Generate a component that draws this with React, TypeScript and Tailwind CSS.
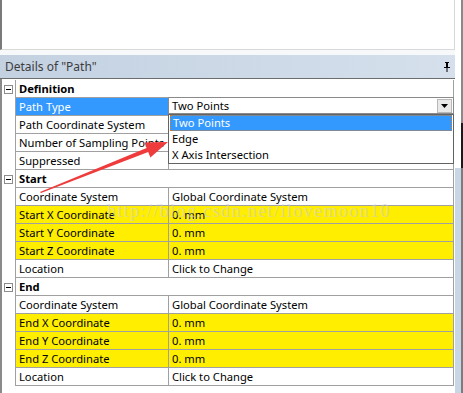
import React from "react";

// ── Data ──────────────────────────────────────────────────────────────────────

type Row =
  | { kind: "group"; label: string }
  | { kind: "prop"; label: string; value: string; yellow?: boolean; selected?: boolean; hidden?: boolean };

const rows: Row[] = [
  { kind: "group", label: "Definition" },
  { kind: "prop", label: "Path Type", value: "Two Points", selected: true },
  { kind: "prop", label: "Path Coordinate System", value: "Global Coordinate System", hidden: true },
  { kind: "prop", label: "Number of Sampling Points", value: "47.", hidden: true },
  { kind: "prop", label: "Suppressed", value: "No", hidden: true },
  { kind: "group", label: "Start" },
  { kind: "prop", label: "Coordinate System", value: "Global Coordinate System" },
  { kind: "prop", label: "Start X Coordinate", value: "0. mm", yellow: true },
  { kind: "prop", label: "Start Y Coordinate", value: "0. mm", yellow: true },
  { kind: "prop", label: "Start Z Coordinate", value: "0. mm", yellow: true },
  { kind: "prop", label: "Location", value: "Click to Change" },
  { kind: "group", label: "End" },
  { kind: "prop", label: "Coordinate System", value: "Global Coordinate System" },
  { kind: "prop", label: "End X Coordinate", value: "0. mm", yellow: true },
  { kind: "prop", label: "End Y Coordinate", value: "0. mm", yellow: true },
  { kind: "prop", label: "End Z Coordinate", value: "0. mm", yellow: true },
  { kind: "prop", label: "Location", value: "Click to Change" },
];

const options = ["Two Points", "Edge", "X Axis Intersection"];

// ── Pieces ────────────────────────────────────────────────────────────────────

const MinusBox = () => (
  <span className="flex h-[9px] w-[9px] items-center justify-center border border-[#8c8c8c] bg-white">
    <span className="h-px w-[5px] bg-black" />
  </span>
);

const PathTypeEditor = () => (
  <>
    {/* combobox */}
    <div className="absolute left-[-1px] right-[-1px] top-[-1px] z-10 flex h-[17px] items-center border border-[#8a8a8a] bg-white">
      <span className="flex-1 pl-[3px] leading-[15px] text-black">Two Points</span>
      <span className="mr-px flex h-[14px] w-[15px] items-center justify-center border border-[#b8b8b8] bg-[#e9e9e9]">
        <svg width="7" height="4" viewBox="0 0 7 4">
          <path d="M0 0h7L3.5 4z" fill="#000" />
        </svg>
      </span>
    </div>
    {/* open list */}
    <div className="absolute left-[-1px] right-[-1px] top-[16px] z-10 h-[50px] border border-[#646464] bg-white">
      {options.map((o, i) => (
        <div
          key={o}
          className={
            i === 0
              ? "mx-px h-[16px] border border-dotted border-[#c87a2a] bg-[#3399ff] pl-[2px] leading-[14px] text-white"
              : "h-[16px] pl-[3px] leading-[16px] text-black"
          }
        >
          {o}
        </div>
      ))}
    </div>
  </>
);

// ── App ───────────────────────────────────────────────────────────────────────

export default function App() {
  return (
    <div
      className="relative flex h-[393px] w-[463px] overflow-hidden bg-white text-[11.2px]"
      style={{ fontFamily: '"Noto Sans", "Liberation Sans", sans-serif' }}
    >
      {/* main pane */}
      <div className="flex w-[455px] flex-col">
        <div className="h-[50px] border-b border-l-2 border-r border-b-[#d9d9d9] border-l-[#7a7a7a] border-r-[#d9d9d9] bg-white" />
        <div className="h-[5px] bg-[#f7f8fa]" />
        <div className="flex h-[23px] items-center justify-between bg-gradient-to-r from-[#c3d1e1] to-[#d5e0ec] pl-[5px] pr-[4px]">
          <span className="text-[12px] text-[#3d3d3d]">Details of "Path"</span>
          <svg width="8" height="10" viewBox="0 0 8 10">
            <path d="M2 0h4v1H5v4h2v1H4.5v4h-1V6H1V5h2V1H2z" fill="#000" />
          </svg>
        </div>
        <div className="h-px bg-[#6d6d6d]" />
        <div className="flex flex-1 flex-col border-l-2 border-[#8a8a8a] pt-px">
          {rows.map((r, i) => (
            <div key={i} className="flex h-[18px]">
              <div className="flex w-[13px] items-center justify-center pt-px">
                {r.kind === "group" ? <MinusBox /> : null}
              </div>
              <div
                className={
                  "flex w-[439px] border-b border-l border-r border-[#a0a0a0] " +
                  (r.kind === "prop" && r.yellow ? "bg-[#ffee00]" : "bg-white")
                }
              >
                {r.kind === "group" ? (
                  <span className="pl-[3px] font-bold leading-[17px] text-black">{r.label}</span>
                ) : (
                  <>
                    <span
                      className={
                        "w-[153px] shrink-0 overflow-hidden whitespace-nowrap border-r border-[#a0a0a0] pl-[3px] leading-[17px] " +
                        (r.selected ? "bg-[#3399ff] text-white" : "text-black")
                      }
                    >
                      {r.label}
                    </span>
                    <span className="relative flex-1 whitespace-nowrap pl-[3px] leading-[17px] text-black">
                      {r.selected ? <PathTypeEditor /> : r.hidden ? null : r.value}
                    </span>
                  </>
                )}
              </div>
            </div>
          ))}
        </div>
      </div>

      {/* neighbouring window edge */}
      <div className="flex w-[8px] flex-col">
        <div className="h-[123px] border-r-2 border-[#8a8a8a] bg-white" />
        <div className="h-[45px] border-r-2 border-[#1a1a1a] bg-white" />
        <div className="flex-1 border-r-2 border-[#7c7c7c] bg-[#c9d6e5]" />
      </div>

      {/* watermark */}
      <span
        className="pointer-events-none absolute left-[107px] top-[198px] z-20 whitespace-nowrap text-[18px] tracking-[1.4px] text-[#cfcfcf] opacity-60"
        style={{ fontFamily: '"Liberation Serif", serif' }}
      >
        http://blog.csdn.net/ilovemoon10
      </span>

      {/* red annotation arrow */}
      <svg className="pointer-events-none absolute left-0 top-0 z-30" width="463" height="393">
        <polygon
          points="40,192 146.6,148.1 144.6,142.6 168,142 150.4,157.4 148.2,151.9 41,193"
          fill="#ef3b3b"
        />
      </svg>
    </div>
  );
}
